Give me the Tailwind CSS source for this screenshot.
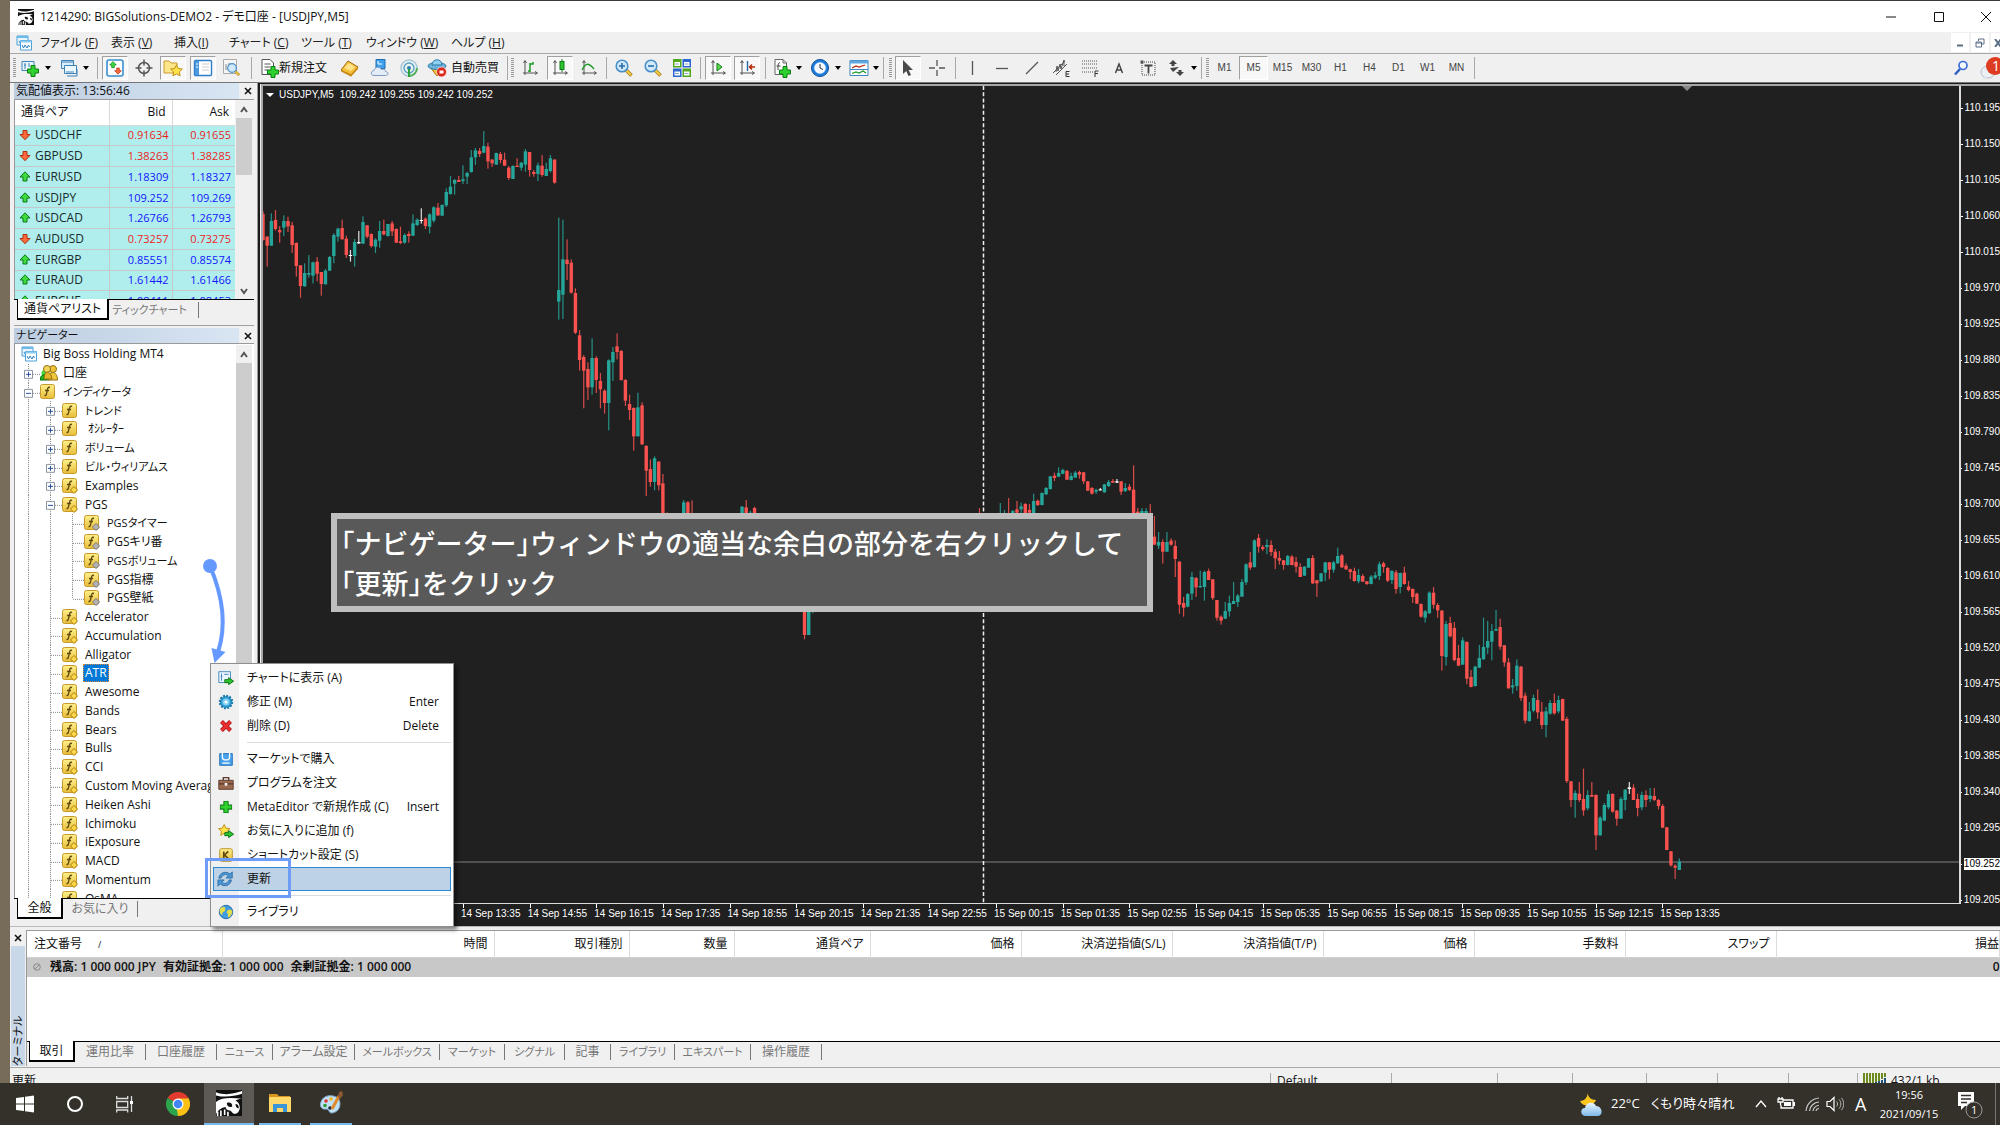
<!DOCTYPE html>
<html lang="ja">
<head>
<meta charset="utf-8">
<title>1214290: BIGSolutions-DEMO2 - デモ口座 - [USDJPY,M5]</title>
<script src="https://cdn.jsdelivr.net/npm/@tailwindcss/browser@4"></script>
</head>
<body class="h-screen overflow-hidden bg-[#776b5a] font-['Open_Sans','Noto_Sans_CJK_JP',sans-serif] text-xs text-[#111] [font-feature-settings:'palt']">

<svg class="absolute size-0" aria-hidden="true" xmlns="http://www.w3.org/2000/svg">
  <defs>
    <linearGradient id="gold" x1="0" y1="0" x2="0" y2="1"><stop offset="0" stop-color="#fff08c"/><stop offset="1" stop-color="#e8bd38"/></linearGradient>
    <linearGradient id="sky" x1="0" y1="0" x2="0" y2="1"><stop offset="0" stop-color="#eaf6ff"/><stop offset="1" stop-color="#7db9e8"/></linearGradient>
  </defs>
  <symbol id="i-plus" viewBox="0 0 12 12"><path d="M4 .5h4V4h3.500v4H8v3.500H4V8H.5V4H4z" fill="#2fd12f" stroke="#0c7f12"/></symbol>
  <symbol id="i-pirate" viewBox="0 0 24 24"><path fill="#111" d="M0 0h24v24H0z"/><path d="M0 2c8 3 15 2 24-1v2.500C16 6 8 7 0 5z" fill="#fff"/><path d="M0 11C5 7 13 7 24 8c-3 0-5 1-6 2 3 1 4 4 4 7-1 3-2 5-5 5-2 0-2-2-4-3-2 0-4-1-4-3-4 0-6 2-9 6z" fill="#fff"/><path d="M10 12c3-1 5 0 5 3-2 2-5 0-5-3zM18 13c2 0 3 1 3 4-2 0-3-2-3-4z" fill="#111"/><path d="M1.500 20v4M4.500 19v5M8 18v5M11 20v4" stroke="#fff" stroke-width="1.500"/></symbol>
  <symbol id="i-charts" viewBox="0 0 16 16"><path d="M1 1h11v9H1z" fill="#eaf5ff" stroke="#4aa0dc"/><path d="M1 1h11v2H1z" fill="#6db9ea"/><path d="M3 6l1 2 1-2" stroke="#3a8cca" fill="none"/><path d="M4.500 5.500h11v9.500h-11z" fill="#fff" stroke="#4aa0dc"/><path d="M4.500 5.500h11v2h-11z" fill="#8cccf2"/><path d="M6 10l1.500 3L9 10l2 3 1.500-3 1 2" stroke="#2d7fc0" fill="none"/></symbol>
  <symbol id="i-f" viewBox="0 0 16 16"><rect x=".5" y=".5" width="14" height="14" rx="2" fill="url(#gold)" stroke="#c69a2a"/><path d="M10 3.500c-2-1-2.500 1-3 4s-1 4.500-2.500 3.800M5 6.500h4" stroke="#5e4a10" stroke-width="1.400" fill="none"/></symbol>
  <symbol id="i-fc" viewBox="0 0 16 16"><use href="#i-f"/><path d="M12 8.500l3.500 3.500L12 15.500 8.500 12z" fill="#ffd84a" stroke="#a87d10"/></symbol>
  <symbol id="i-fg" viewBox="0 0 16 16"><use href="#i-f"/><path d="M12 8.500l3.500 3.500L12 15.500 8.500 12z" fill="#b4b4b4" stroke="#777"/></symbol>
  <symbol id="i-people" viewBox="0 0 18 16"><circle cx="4.500" cy="8" r="3" fill="#46d83e"/><path d="M0 15c0-7 9-7 9 0z" fill="#18b418" stroke="#087008"/><circle cx="13" cy="4" r="3.500" fill="#eec23a" stroke="#937010"/><path d="M8 15c0-10 9.500-10 9.500 0z" fill="#f0c83c" stroke="#937010"/><circle cx="7" cy="4" r="3.500" fill="#f5d65c" stroke="#937010"/><path d="M4 14c0-9 7-9 8 0z" fill="#e5b428" stroke="#937010"/></symbol>
  <symbol id="i-up" viewBox="0 0 12 12"><path d="M6 .8l5 5.200H8V10H4V6H1z" fill="#3edb3e" stroke="#0b7a19"/></symbol>
  <symbol id="i-down" viewBox="0 0 12 12"><path d="M6 10.700L1 5.500h3v-4h4v4h3z" fill="#ff6a3c" stroke="#b02c0c"/></symbol>
  <symbol id="i-axes" viewBox="0 0 20 20"><path d="M5 3v14M3 15h14M3.500 5L5 2.500 6.500 5M15 13.500l2.500 1.500-2.500 1.500" stroke="#555" fill="none"/></symbol>
  <symbol id="i-star" viewBox="0 0 14 14"><path d="M7 .8l1.900 4 4.400.6-3.200 3 .8 4.400L7 10.700l-3.900 2.100.8-4.400-3.200-3 4.400-.6z" fill="#ffe14a" stroke="#b98a10"/></symbol>
  <symbol id="i-lens" viewBox="0 0 20 20"><path d="M11.500 11.500l6 6" stroke="#a67c12" stroke-width="3.500"/><path d="M11.500 11.500l5.500 5.500" stroke="#f5cc48" stroke-width="2"/><circle cx="8" cy="8" r="5.800" fill="#cfe8fb" stroke="#4a90c8" stroke-width="1.600"/></symbol>
  <symbol id="i-arrow" viewBox="0 0 10 8"><path d="M.5 2.500h4v-2L9.500 4l-5 3.500v-2h-4z" fill="#2fc52f" stroke="#0b7414"/></symbol>
  <symbol id="i-page" viewBox="0 0 20 20"><path d="M3 1.500h8l3.500 3.500v11.500H3z" fill="#fff" stroke="#666"/><path d="M11 1.500V5h3.500" fill="none" stroke="#666"/></symbol>
</svg>

<div class="flex h-full flex-col">
 <div class="min-h-0 flex-1 overflow-hidden pl-[10px]">
 <main class="flex h-full flex-col border-t border-[#3d3a35] bg-[#f0f0f0]">

  <header class="flex h-[31px] shrink-0 items-center bg-white pl-2">
    <svg class="mr-1.5 size-4"><use href="#i-pirate"/></svg>
    <h1 class="flex-1 text-xs">1214290: BIGSolutions-DEMO2 - デモ口座 - [USDJPY,M5]</h1>
    <button aria-label="最小化" class="grid w-12 place-items-center"><svg class="h-3 w-3" viewBox="0 0 12 12"><path d="M1 6h10" stroke="#111"/></svg></button>
    <button aria-label="最大化" class="grid w-12 place-items-center"><svg class="h-3 w-3" viewBox="0 0 12 12"><path d="M1.500 1.500h9v9h-9z" fill="none" stroke="#111"/></svg></button>
    <button aria-label="閉じる" class="grid w-[37px] place-items-center pl-2"><svg class="h-3 w-3" viewBox="0 0 12 12"><path d="M1 1l10 10M11 1L1 11" stroke="#111"/></svg></button>
  </header>

  <nav class="flex h-[21px] shrink-0 items-center pl-1.5 whitespace-nowrap text-[#222]">
    <svg class="mr-2 size-4"><use href="#i-charts"/></svg>
    <a href="#" class="w-[71px]">ファイル (<u>F</u>)</a>
    <a href="#" class="w-[63px]">表示 (<u>V</u>)</a>
    <a href="#" class="w-[55px]">挿入(<u>I</u>)</a>
    <a href="#" class="w-[72px]">チャート (<u>C</u>)</a>
    <a href="#" class="w-[65px]">ツール (<u>T</u>)</a>
    <a href="#" class="w-[85px]">ウィンドウ (<u>W</u>)</a>
    <a href="#">ヘルプ (<u>H</u>)</a>
    <div class="ml-auto flex h-[19px] gap-0.5">
      <button aria-label="チャートを最小化" class="grid w-[18px] place-items-center bg-white"><svg class="size-2" viewBox="0 0 8 8"><path d="M1 6.500h6" stroke="#5b6f86" stroke-width="2"/></svg></button>
      <button aria-label="チャートを元に戻す" class="grid w-[18px] place-items-center bg-white"><svg class="size-2.5" viewBox="0 0 10 10"><path d="M3.500 3V1h5.500v5H7M1 4h5.500v5H1zM1 5h5" stroke="#5b6f86" fill="none"/></svg></button>
      <button aria-label="チャートを閉じる" class="grid w-[9px] place-items-center overflow-hidden bg-white"><svg class="size-2" viewBox="0 0 8 8"><path d="M3 0l6 8M9 0L3 8" stroke="#5b6f86" stroke-width="2"/></svg></button>
    </div>
  </nav>

  <div id="toolbar" class="flex h-[29px] shrink-0 items-center border-t border-[#a8a8a8] whitespace-nowrap"></div>

  <div class="flex min-h-0 flex-1 border-t border-[#777]">
    <aside class="flex w-[248px] shrink-0 flex-col border-r border-[#9a9a9a] pr-[3px] pl-1">
      <section class="flex h-[243px] shrink-0 flex-col border-b border-[#a0a0a0]">
        <div class="flex h-[16px] shrink-0 items-center">
          <h2 class="h-full flex-1 bg-linear-to-r from-[#bccde0] to-[#d8e5f3] pl-0.5 text-xs leading-4">気配値表示: 13:56:46</h2>
          <button aria-label="気配値表示を閉じる" class="grid w-[15px] place-items-center pl-0.5"><svg class="size-2" viewBox="0 0 8 8"><path d="M1 1l6 6M7 1L1 7" stroke="#111" stroke-width="1.600"/></svg></button>
        </div>
        <div class="flex h-[200px] shrink-0 overflow-hidden border-t border-l border-[#999]">
          <table class="h-[212px] w-[220px] shrink-0 table-fixed border-collapse bg-[#b0eeee]">
            <thead class="bg-white text-xs"><tr class="h-[25px]"><th class="w-[94px] border-r border-b border-[#d9d9d9] pl-1.5 text-left font-normal">通貨ペア</th><th class="w-[63px] border-r border-b border-[#d9d9d9] pr-1.5 text-right font-normal">Bid</th><th class="border-b border-[#d9d9d9] pr-1.5 text-right font-normal">Ask</th></tr></thead>
            <tbody id="quotes"></tbody>
          </table>
          <div class="flex w-[17px] flex-col items-center bg-[#f0f0f0]">
            <svg class="mt-1.5 h-2 w-2" viewBox="0 0 8 8"><path d="M1 6l3-4 3 4" fill="none" stroke="#555" stroke-width="2"/></svg>
            <div class="mt-1 h-[57px] w-4 bg-[#cdcdcd]"></div>
            <svg class="mt-auto mb-1 h-2 w-2" viewBox="0 0 8 8"><path d="M1 2l3 4 3-4" fill="none" stroke="#555" stroke-width="2"/></svg>
          </div>
        </div>
        <div class="flex h-[21px] border-t border-black pl-[3px] whitespace-nowrap">
          <button class="-mt-px w-[92px] border-r-2 border-b-2 border-l border-black bg-white">通貨ペアリスト</button>
          <button class="my-0.5 w-[90px] border-r border-[#777] pr-2 text-[11px] text-[#777]">ティックチャート</button>
        </div>
      </section>

      <section class="flex min-h-0 flex-1 flex-col pt-[2px]">
        <div class="flex h-[15px] shrink-0 items-center">
          <h2 class="h-full flex-1 bg-linear-to-r from-[#bccde0] to-[#d8e5f3] pl-0.5 text-[11px] leading-[14px]">ナビゲーター</h2>
          <button aria-label="ナビゲーターを閉じる" class="grid w-[15px] place-items-center pl-0.5"><svg class="size-2" viewBox="0 0 8 8"><path d="M1 1l6 6M7 1L1 7" stroke="#111" stroke-width="1.600"/></svg></button>
        </div>
        <div class="flex h-[555px] shrink-0 overflow-hidden border-t border-l border-[#999] bg-white pt-px">
          <ul id="tree" class="grid h-[563px] w-[221px] shrink-0 auto-rows-fr overflow-hidden pl-[3px] whitespace-nowrap"></ul>
          <div class="flex w-4 flex-col items-center bg-[#f0f0f0]">
            <svg class="mt-1.5 h-2 w-2 shrink-0" viewBox="0 0 8 8"><path d="M1 6l3-4 3 4" fill="none" stroke="#555" stroke-width="2"/></svg>
            <div class="mt-1 w-4 flex-1 bg-[#cdcdcd]"></div>
          </div>
        </div>
        <div class="flex h-[21px] border-t border-black pl-[3px] whitespace-nowrap">
          <button class="-mt-px w-[46px] border-r-2 border-b-2 border-l border-black bg-white">全般</button>
          <button class="my-0.5 w-[75px] border-r border-[#777] text-[#777]">お気に入り</button>
        </div>
      </section>
    </aside>

    <section class="flex min-w-0 flex-1 flex-col border-t border-l-2 border-[#1a1a1a] pl-px">
      <div class="flex min-h-0 flex-1 flex-col border-t-2 border-l-2 border-[#a9a5ab] bg-[#202020] font-['Liberation_Sans',sans-serif] text-[10px] text-white">
        <div class="flex min-h-0 flex-1">
          <div class="relative min-w-0 flex-1 overflow-hidden border-r-2 border-b border-[#dcdcdc]">
            <svg id="plot" class="block h-full w-full" role="img" aria-label="USDJPY 5分足チャート"></svg>
            <p class="absolute top-0 left-[3px] flex h-[18px] items-center"><svg class="mr-[5px] h-1 w-2" viewBox="0 0 8 4"><path d="M0 0h8L4 4z" fill="#fff"/></svg>USDJPY,M5<span class="ml-1.5">109.242 109.255 109.242 109.252</span></p>
          </div>
          <ol id="prices" class="w-[39px] shrink-0 overflow-hidden pt-1"></ol>
        </div>
        <ol id="times" class="grid h-[22px] w-[1266px] shrink-0 grid-cols-19 ml-[198px] whitespace-nowrap"></ol>
      </div>
    </section>
  </div>

  <section class="flex h-[141px] shrink-0 border-t border-[#bbb] pt-[3px] pb-px">
    <div class="flex w-[16px] shrink-0 flex-col items-center px-px">
      <button aria-label="ターミナルを閉じる" class="grid h-4 place-items-center"><svg class="size-2" viewBox="0 0 8 8"><path d="M1 1l6 6M7 1L1 7" stroke="#111" stroke-width="1.600"/></svg></button>
      <h2 class="flex w-full flex-1 rotate-180 items-center bg-[#c9d8e9] text-[11px] leading-3 [text-orientation:sideways] [writing-mode:vertical-rl]">ターミナル</h2>
    </div>
    <div class="flex min-w-0 flex-1 flex-col border-t border-l border-[#999]">
      <div class="h-[110px] shrink-0 overflow-hidden bg-white">
        <table class="w-full min-w-[1973px] table-fixed border-collapse">
          <thead><tr class="h-[26px] border-b border-[#d0d0d0] [&>th]:border-r [&>th]:border-[#dcdcdc] [&>th]:pr-1.5 [&>th]:text-right [&>th]:font-normal">
            <th class="w-[195px]"><span class="block pl-[7px] text-left">注文番号<span class="ml-4 text-[9px]">/</span></span></th>
            <th class="w-[272px]">時間</th><th class="w-[135px]">取引種別</th><th class="w-[105px]">数量</th><th class="w-[136px]">通貨ペア</th><th class="w-[151px]">価格</th><th class="w-[151px]">決済逆指値(S/L)</th><th class="w-[151px]">決済指値(T/P)</th><th class="w-[151px]">価格</th><th class="w-[151px]">手数料</th><th class="w-[151px]">スワップ</th><th class="w-auto"><span class="-mr-1.5">損益</span></th>
          </tr></thead>
          <tbody><tr class="h-5 bg-[#c8c8c8] text-xs font-semibold">
            <td colspan="11" class="p-0 pl-1.5"><div class="flex items-center gap-[7px] leading-4 whitespace-nowrap"><svg class="mr-0.5 size-2" viewBox="0 0 8 8"><circle cx="4" cy="4" r="3.300" fill="none" stroke="#888"/><path d="M2 6l4-4" stroke="#888"/></svg><span>残高: 1 000 000 JPY</span><span>有効証拠金: 1 000 000</span><span>余剰証拠金: 1 000 000</span></div></td>
            <td class="p-0 text-right leading-4">0</td>
          </tr></tbody>
        </table>
      </div>
      <div class="flex h-[21px] border-t border-black pl-0.5 text-[#777]">
        <button class="-mt-px w-[46px] border-r-2 border-b-2 border-l border-black bg-white text-[#111]">取引</button>
        <div class="my-0.5 flex whitespace-nowrap [&>button]:border-r [&>button]:border-[#777]">
          <button class="w-[71px]">運用比率</button><button class="w-[71px]">口座履歴</button><button class="w-[56px] text-[11px]">ニュース</button><button class="w-[82px]">アラーム設定</button><button class="w-[85px] text-[11px]">メールボックス</button><button class="w-[65px] text-[11px]">マーケット</button><button class="w-[60px] text-[11px]">シグナル</button><button class="w-[46px]">記事</button><button class="w-[64px] text-[11px]">ライブラリ</button><button class="w-[76px] text-[11px]">エキスパート</button><button class="w-[71px]">操作履歴</button>
        </div>
      </div>
    </div>
  </section>

  <footer class="flex h-[16px] shrink-0 overflow-hidden border-t border-[#a8a8a8] pt-[5px] whitespace-nowrap">
    <p class="flex-1 pl-0.5">更新</p>
    <p class="w-[121px] border-l border-[#aaa] pl-1.5">Default</p>
    <p class="w-[106px] border-l border-[#aaa]"></p><p class="w-[75px] border-l border-[#aaa]"></p><p class="w-[74px] border-l border-[#aaa]"></p><p class="w-[71px] border-l border-[#aaa]"></p><p class="w-[71px] border-l border-[#aaa]"></p><p class="w-[69px] border-l border-[#aaa]"></p>
    <p class="flex w-[143px] items-start gap-1 border-l border-[#aaa] pl-[5px]"><svg class="h-4 w-6" viewBox="0 0 24 16"><path d="M1 0v12M4 0v12M7 0v12M10 0v10M13 0v9M16 0v8M19 0v6M22 0v4" stroke="#6d8a1e" stroke-width="2"/><path d="M7 13v3M10 11v5M13 9v7M16 8v8M19 7v9M22 5v11" stroke="#1b4f78" stroke-width="2"/></svg>432/1 kb</p>
  </footer>
 </main>
 </div>

 <div class="flex h-[42px] shrink-0 items-center bg-[#34312b] text-white">
   <button aria-label="スタート" class="grid w-[50px] place-items-center"><svg class="size-[18px]" viewBox="0 0 18 18"><path d="M0 3l8-1v6.500H0zM9 1.800L18 .5v8H9zM0 9.500h8V16l-8-1zM9 9.500h9v8l-9-1.300z" fill="#fff"/></svg></button>
   <button aria-label="検索" class="grid w-[50px] place-items-center"><svg class="size-[18px]" viewBox="0 0 18 18"><circle cx="9" cy="9" r="7" fill="none" stroke="#fff" stroke-width="2"/></svg></button>
   <button aria-label="タスクビュー" class="grid w-[50px] place-items-center"><svg class="size-[18px]" viewBox="0 0 18 18"><path d="M.7 1v2.500h11V1M.7 6.500h11v6H.7zM.7 17.500V15h11v2.500M15.500 1v16" fill="none" stroke="#ddd" stroke-width="1.300"/><path d="M14 6h3v3h-3z" fill="#fff"/></svg></button>
   <button aria-label="Chrome" class="grid w-[54px] place-items-center pl-0.5"><svg class="size-6" viewBox="0 0 24 24"><path d="M12 12L1.600 6A12 12 0 0 1 22.400 6z" fill="#e33b2e"/><path d="M12 12L1.600 6A12 12 0 0 0 12 24z" fill="#2ba24c"/><path d="M12 12L22.400 6A12 12 0 0 1 12 24z" fill="#fbc116"/><path d="M12 6.500h10.700L16.500 15 12 24l-1-6z" fill="#fbc116"/><circle cx="12" cy="12" r="5.500" fill="#fff"/><circle cx="12" cy="12" r="4.300" fill="#4285f4"/></svg></button>
   <button aria-label="MT4" class="grid h-full w-[50px] place-items-center border-b-2 border-[#76b9ed] bg-[#5d5a55]"><svg class="size-[26px]"><use href="#i-pirate"/></svg></button>
   <button aria-label="エクスプローラー" class="ml-[5px] grid h-full w-[42px] place-items-center border-b-2 border-[#76b9ed]"><svg class="size-6" viewBox="0 0 24 24"><path d="M1 3h8l2 2h11v4H1z" fill="#d9961e"/><path d="M1 6h22v15H1z" fill="#ffd76a"/><path d="M5 21v-8h14v8h-4v-4H9v4z" fill="#3c94d8"/></svg></button>
   <button aria-label="ペイント" class="ml-[9px] grid h-full w-[42px] place-items-center border-b-2 border-[#76b9ed]"><svg class="size-[26px]" viewBox="0 0 26 26"><path d="M3 12C5 5 14 4 20 8c4 5 2 14-6 15-4 0-2-4-6-4-4 1-7-3-5-7z" fill="#bfe0f5" stroke="#7fa9c8"/><circle cx="8" cy="11" r="1.800" fill="#d33"/><circle cx="13" cy="9" r="1.800" fill="#f5b51e"/><circle cx="7" cy="15.500" r="1.800" fill="#2a9e3a"/><circle cx="12" cy="18" r="1.800" fill="#223"/><path d="M14 19l7-13" stroke="#e08a2a" stroke-width="3"/><path d="M20 7l1-5 3-1 1 4-3 4z" fill="#8c5a32"/></svg></button>
   <div class="ml-auto flex h-full items-center text-[13px]">
     <svg class="mr-2 h-7 w-6" viewBox="0 0 24 28"><path d="M9 1c-1 6 3 9 8 9-2 6-13 8-16 1 5 0 8-4 8-10z" fill="#fbc61e"/><path d="M6 26c-5-1-5-8 0-8 1-6 9-7 11-2 6 0 8 9 2 10z" fill="url(#sky)"/></svg>
     <span class="w-10">22°C</span><span class="w-[104px]">くもり時々晴れ</span>
     <svg class="mr-[10px] h-3 w-3" viewBox="0 0 12 12"><path d="M1 9l5-6 5 6" stroke="#fff" stroke-width="1.300" fill="none"/></svg>
     <svg class="mr-[9px] h-4 w-[18px]" viewBox="0 0 18 16"><path d="M6 4h10v8H4V9M2 1v2M5 1v2M1 3h5v3H1zM3.500 6v3" fill="none" stroke="#fff" stroke-width="1.300"/><path d="M7 6h7v4H7zM16 6h2v4h-2z" fill="#fff"/></svg>
     <svg class="mr-1.5 h-4 w-4" viewBox="0 0 16 16"><path d="M2 15A14 14 0 0 1 15 2M5.500 15A10 10 0 0 1 15 6M9 15a6 6 0 0 1 6-5.500M12 15a3 3 0 0 1 3-2.500" stroke="#ccc" stroke-width="1.200" fill="none"/></svg>
     <svg class="mr-[11px] h-4 w-[18px]" viewBox="0 0 18 16"><path d="M1 5.500h3l4-4v13l-4-4H1z" fill="none" stroke="#fff" stroke-width="1.200"/><path d="M10.500 5.500c1.500 1.500 1.500 3.500 0 5M13 3.500c2.500 2.500 2.500 6.500 0 9M15.500 2c3 3.500 3 8.500 0 12" stroke="#bbb" fill="none"/></svg>
     <span class="w-[19px] text-lg leading-none">A</span>
     <div class="w-[70px] text-center text-[11px] leading-[19px]"><div>19:56</div><div>2021/09/15</div></div>
     <svg class="ml-3 h-9 w-7" viewBox="0 0 28 36"><path d="M2 6h16v14h-9l-4 4v-4H2z" fill="#fff"/><path d="M5 9.500h10M5 13h10M5 16.500h6" stroke="#34312b" stroke-width="1.400"/><circle cx="18" cy="24" r="8" fill="#34312b" stroke="#999"/><text x="15" y="28" font-size="11" fill="#fff">1</text></svg>
     <div class="ml-[11px] h-full w-[5px] border-l border-[#777]"></div>
   </div>
 </div>
</div>

<div class="absolute top-[513px] left-[331px] w-[822px] border-[6px] border-[#bfbfbf] bg-[#595959] px-1 pt-1 pb-[3px] font-['Noto_Sans_CJK_JP',sans-serif] text-[27px] leading-10 font-medium whitespace-nowrap text-white [font-feature-settings:'halt']">「ナビゲーター」ウィンドウの適当な余白の部分を右クリックして<br>「更新」をクリック</div>

<svg class="absolute top-[556px] left-[200px] h-[110px] w-10" viewBox="0 0 40 110"><circle cx="10" cy="10" r="7" fill="#6699ff"/><path d="M10 10C21 36 28 66 18 96" fill="none" stroke="#6699ff" stroke-width="4"/><path d="M11.500 92l14 4-11 11z" fill="#6699ff"/></svg>

<div id="menu" role="menu" class="absolute top-[663px] left-[210px] w-[244px] border border-[#8f8f8f] bg-linear-to-r from-[#f0f0f0] from-[28px] to-white to-[28px] p-0.5 whitespace-nowrap shadow-[3px_3px_4px_rgba(0,0,0,0.45)]"></div>
<div class="absolute top-[858px] left-[205px] h-10 w-[86px] border-[3px] border-[#6f9cf8]"></div>

<script>
const $ = id => document.getElementById(id);

/* toolbar buttons, separators and grips, left to right */
const pressed = 'grid h-6 w-[26px] place-items-center border border-[#a0a0a0] border-r-white border-b-white bg-[#f8f8f8]';
const ico = s => `<svg class="size-5 shrink-0" viewBox="0 0 20 20">${s}</svg>`;
const use = (id, x, y, w, h) => `<use href="#${id}" x="${x}" y="${y}" width="${w}" height="${h}"/>`;
const axes = use('i-axes', 0, 0, 20, 20);
const btn = (cls, label, s) => `<button class="${cls}" aria-label="${label}">${ico(s)}</button>`;
const b = (w, label, s) => btn(`grid h-6 shrink-0 place-items-center ${w}`, label, s);
const p = (label, s, gap = '') => btn(`${pressed} shrink-0 ${gap}`, label, s);
const tri = (w, label) => `<button class="grid h-6 shrink-0 place-items-center ${w}" aria-label="${label}"><svg class="h-1 w-[6px]" viewBox="0 0 6 4"><path d="M0 0h6L3 4z"/></svg></button>`;
const sep = w => `<div class="flex h-[22px] shrink-0 justify-center ${w}"><div class="border-l border-[#a8a8a8]"></div></div>`;
const grip = w => `<div class="flex h-5 shrink-0 justify-center ${w}"><div class="w-[3px] bg-[repeating-linear-gradient(#999_0_1px,#f0f0f0_1px_2px)]"></div></div>`;
const tf = (t, on) => `<button class="grid h-6 w-[29px] shrink-0 place-items-center font-['Liberation_Sans',sans-serif] text-[10px] text-[#444] ${on ? 'border border-[#a0a0a0] border-r-white border-b-white bg-[#f8f8f8]' : ''}">${t}</button>`;
const line = '#555';
$('toolbar').innerHTML = [
  grip('w-2'),
  b('w-6', '新規チャート', `<path d="M2 3.500h12v9H2z" fill="#eaf5ff" stroke="#3e83b8"/><path d="M5 5v6M4 7h2M9 5v4" stroke="#3e83b8"/>` + use('i-plus', 7, 7, 12, 12)),
  tri('w-3', '新規チャートの一覧'),
  b('ml-1 w-[22px]', '組表示', `<path d="M2.500 2.500h12v8h-12z" fill="#d9edfb" stroke="#3e83b8"/><path d="M5.500 7.500h12v8h-12z" fill="#eef8ff" stroke="#3e83b8"/><path d="M2.500 4h12M7 14l8 0M18 11v7H8" stroke="#3e83b8" fill="none"/>`),
  tri('w-3', '組表示の一覧'), sep('w-[10px]'),
  p('気配値表示', `<rect x="2" y="2" width="16" height="16" rx="2" fill="#fff" stroke="#3a8fd0" stroke-width="1.600"/>` + use('i-up', 4, 3, 8, 8) + use('i-down', 9, 9, 8, 8)),
  b('w-8', 'データウィンドウ', `<circle cx="10" cy="10" r="5.500" fill="none" stroke="${line}" stroke-width="1.500"/><path d="M10 1.500v6M10 12.500v6M1.500 10h6M12.500 10h6" stroke="${line}" stroke-width="1.500"/>`),
  p('ナビゲーター', `<path d="M1 3h5l2 2h6v10H1z" fill="#ffe58a" stroke="#c9992a"/>` + use('i-star', 7, 6, 13, 13)),
  p('ターミナル', `<rect x="1.500" y="2.500" width="17" height="15" rx="1" fill="#fff" stroke="#2d7ecb" stroke-width="1.400"/><path d="M2 3h4v14H2z" fill="#4c9be0"/><path d="M9 6h7M9 9h7M9 12h7" stroke="#ccc"/><path d="M3 6h2M3 9h2" stroke="#fff"/>`, 'ml-1'),
  b('w-8', 'ストラテジーテスター', `<path d="M1.500 1.500h13v14h-13z" fill="#f5f5f5" stroke="#aaa"/><path d="M4 12V6M7 13V5" stroke="#888"/>` + use('i-lens', 4, 4, 15, 15)),
  sep('w-[6px]'),
  `<button class="ml-[5px] flex h-6 w-[75px] shrink-0 items-center">${ico(`<path d="M3 1.500h8l3.500 3.500v11.500H3z" fill="#fff" stroke="#555"/><path d="M5.500 6h6M5.500 9h6M5.500 12h4" stroke="#555"/>` + use('i-plus', 8, 8, 12, 12))}新規注文</button>`,
  b('w-[31px]', 'メタエディター', `<path d="M1 12L8 3l10 6-7 9z" fill="#f4bf3b" stroke="#a26c0c"/><path d="M1 12l10 4 7-7v2l-7 7.500L1 13.500z" fill="#c98a18"/><path d="M4 10l5-5 6 4-4 4z" fill="#ffe38a"/>`),
  b('w-[29px]', 'マーケット', `<path d="M6 1.500h9v9H6z" fill="#3fa0ec" stroke="#1c6cb5"/><path d="M8 3v3h4" stroke="#fff" fill="none"/><path d="M4 17.500c-4 0-3-5 0-5 1-4 6-4 7.500-1 2-1 4 0 4 2 4 1 3 4 0 4z" fill="#e3ecf7" stroke="#7f9bc0"/>`),
  b('w-[29px]', 'シグナル', `<circle cx="10" cy="10" r="8" fill="#e7f3ec" stroke="#a8c6d8" stroke-width="1.500"/><circle cx="10" cy="10" r="5" fill="none" stroke="#5b9fc8" stroke-width="1.400"/><path d="M10 18a8 8 0 0 0 8-8" fill="none" stroke="#4fb158" stroke-width="2"/><circle cx="10" cy="10" r="2" fill="#2d7fb5"/><path d="M10 11v8" stroke="#2ea23a" stroke-width="2"/>`),
  `<button class="flex h-6 w-[85px] shrink-0 items-center border-r border-[#a8a8a8] pl-1">${ico(`<path d="M3 9l7 9 8-8z" fill="#f4c03a" stroke="#a9760f"/><ellipse cx="10" cy="8" rx="9" ry="3.500" fill="#6cb4dc" stroke="#2d7ba8"/><path d="M5 7c0-7 10-7 10 0z" fill="#8fd0f0" stroke="#2d7ba8"/><circle cx="14.500" cy="14" r="5" fill="#dd2a1b" stroke="#fff" stroke-width=".6"/><path d="M12.500 12.500h4v3h-4z" fill="#fff"/>`)}<span class="pl-1">自動売買</span></button>`,
  grip('w-2'),
  b('w-[31px] pr-1', 'バーチャート', axes + `<path d="M10 14V5M8 13h2M10 6h3V4" stroke="#1a9a26" stroke-width="1.500" fill="none"/>`),
  p('ローソク足', axes + `<path d="M12 1v13" stroke="#0b7a19"/><rect x="10" y="3.500" width="4" height="8" fill="#2fc52f" stroke="#0b7a19"/>`),
  b('w-[31px]', 'ラインチャート', axes + `<path d="M3 12c4-8 7-7 12-1" stroke="#1a9a26" fill="none" stroke-width="1.300"/>`),
  sep('w-[5px]'),
  b('w-[29px]', '拡大', use('i-lens', 0, 0, 20, 20) + `<path d="M8 5v6M5 8h6" stroke="#2b6ea8" stroke-width="1.600"/>`),
  b('w-[29px]', '縮小', use('i-lens', 0, 0, 20, 20) + `<path d="M5 8h6" stroke="#2b6ea8" stroke-width="1.600"/>`),
  b('w-[29px]', '整列', `<path d="M1 1h8.500v8.500H1zM10.500 10.500H19V19h-8.500z" fill="#52a61c"/><path d="M10.500 1H19v8.500h-8.500zM1 10.500h8.500V19H1z" fill="#2d66d0"/><path d="M2.500 4H8v4H2.500zM12 4h5.500v4H12zM2.500 13.500H8v4H2.500zM12 13.500h5.500v4H12z" fill="#fff"/><path d="M3 6h4M12.500 6h4M3 15.500h4M12.500 15.500h4" stroke="#8ab"/>`),
  sep('w-[9px]'),
  p('自動スクロール', axes + `<path d="M9 5l5 4-5 4z" fill="#5fdc4f" stroke="#0b7a19"/>`),
  p('チャートシフト', axes + `<path d="M10.500 3v10" stroke="#2468a8" stroke-width="1.400"/><path d="M18 9h-5M15 6.500L12.500 9l2.500 2.500" stroke="#b3290d" stroke-width="1.500" fill="none"/>`, 'ml-[3px]'),
  sep('w-[10px]'),
  b('w-6', 'インディケータ', use('i-page', 0, 0, 20, 20) + `<path d="M8 5c-2-1-2 2-2 7M4.500 8h4" stroke="#444" fill="none"/>` + use('i-plus', 7, 8, 12, 12)),
  tri('w-[10px]', 'インディケータの一覧'),
  b('ml-[3px] w-[26px]', '時間足', `<circle cx="10" cy="10" r="8.500" fill="#1f7fe0" stroke="#0e4d97"/><circle cx="10" cy="10" r="5.800" fill="#f4f9ff"/><path d="M10 6v4l3 1.500" stroke="#333" fill="none"/>`),
  tri('w-[10px]', '時間足の一覧'),
  b('ml-1 w-6', '定型チャート', `<path d="M1 2.500h18v15H1z" fill="#fff" stroke="#3a86c2"/><path d="M1 2.500h18v3H1z" fill="#5ea8de"/><path d="M3 10l4-2 3 1 6-2" stroke="#b3290d" fill="none" stroke-width="1.300"/><path d="M1 11.500h18" stroke="#3a86c2"/><path d="M3 15.500l4-1.500 3 1 4-2 3 2" stroke="#1a9a26" fill="none" stroke-width="1.300"/>`),
  tri('w-[10px]', '定型チャートの一覧'), sep('w-[4px]'), grip('w-[10px]'),
  p('カーソル', `<path d="M5 2v14l3.200-3 2.300 5 2.500-1-2.300-5H15z" fill="#4a4a4a"/>`),
  b('w-8', '十字カーソル', `<path d="M10 2v6M10 12v6M2 10h6M12 10h6" stroke="${line}" stroke-width="1.300"/>`),
  sep('w-1'),
  b('w-[30px]', '垂直線', `<path d="M10.500 3v14" stroke="${line}" stroke-width="1.300"/>`),
  b('w-[30px]', '水平線', `<path d="M4 10.500h12" stroke="${line}" stroke-width="1.300"/>`),
  b('w-[29px]', 'トレンドライン', `<path d="M4 16L16 4" stroke="${line}" stroke-width="1.300"/>`),
  b('w-[29px]', 'チャネル', `<path d="M2 15L14 3M5 17L16 6M5 14l1-6 1 5 2-7 1 5 3-9v6" stroke="${line}" fill="none"/><path d="M18.500 13.500h-3.500v5h3.500M15 16h3" stroke="#333" fill="none"/>`),
  b('w-[29px]', 'フィボナッチ', `<path d="M2 3h15M2 6h15M2 10h15M2 14h11" stroke="${line}" stroke-dasharray="1 1"/><path d="M18.500 13h-3.500v6M15 15.500h3" stroke="#333" fill="none"/>`),
  b('w-[29px]', '文字列', `<path d="M6.500 15l3.500-9 3.500 9M7.500 12h5" stroke="#444" stroke-width="1.500" fill="none"/>`),
  b('w-[29px]', 'ラベル', `<path d="M4 4h13v13H4z" stroke="#444" stroke-dasharray="1 1" fill="none"/><path d="M6.500 7.500h8M10.500 7.500v8" stroke="#444" stroke-width="1.800"/><path d="M2.500 2.500h3v3h-3z" fill="#555"/>`),
  b('w-[28px]', '矢印', `<path d="M7 2l4 4H8.500v2h-3V6H3zM14 18l4-4h-2.500v-2h-3v2H10zM4 10l3 4 6-5" fill="#444"/>`),
  tri('w-2', '矢印の一覧'), sep('w-[6px]'), grip('w-[6px]'),
  tf('M1'), tf('M5', true), tf('M15'), tf('M30'), tf('H1'), tf('H4'), tf('D1'), tf('W1'), tf('MN'), sep('w-[6px]'),
  `<button class="ml-auto grid h-6 w-5 place-items-center" aria-label="検索"><svg class="size-4" viewBox="0 0 16 16"><path d="M7 9l-5 5.500" stroke="#2c60c4" stroke-width="2.500"/><circle cx="10" cy="5.500" r="4" fill="#f4f8ff" stroke="#3b6fd6" stroke-width="1.700"/></svg></button>`,
  `<button class="ml-2 h-7 w-[21px] shrink-0 overflow-hidden" aria-label="通知"><svg class="h-7 w-[26px]" viewBox="0 0 26 28"><ellipse cx="9" cy="18" rx="7" ry="6" fill="#eceff4" stroke="#b5bcc6"/><path d="M5 22l-1 4 5-3z" fill="#dfe3ea"/><circle cx="16" cy="12" r="9" fill="#dd3c20"/><text x="13" y="17" font-size="14" fill="#fff">1</text></svg></button>`
].join('');

/* market watch */
$('quotes').innerHTML = [
  ['USDCHF', '0.91634', '0.91655', 0], ['GBPUSD', '1.38263', '1.38285', 0], ['EURUSD', '1.18309', '1.18327', 1],
  ['USDJPY', '109.252', '109.269', 1], ['USDCAD', '1.26766', '1.26793', 1], ['AUDUSD', '0.73257', '0.73275', 0],
  ['EURGBP', '0.85551', '0.85574', 1], ['EURAUD', '1.61442', '1.61466', 1], ['EURCHF', '1.08411', '1.08453', 1]
].map(([s, bid, ask, up]) => `<tr class="border-b border-[#c4c8c8] ${up ? 'text-[#1414ff]' : 'text-[#ee1c1c]'}">
  <td class="border-r border-[#c4c8c8] p-0 pl-1 text-xs leading-4 text-[#1a2a2a]"><div class="flex items-center gap-1"><svg class="size-3"><use href="#${up ? 'i-up' : 'i-down'}"/></svg>${s}</div></td>
  <td class="border-r border-[#c4c8c8] p-0 pr-[3px] text-right text-[11px] leading-4">${bid}</td><td class="p-0 pr-1 text-right text-[11px] leading-4">${ask}</td></tr>`).join('');

/* navigator tree: [level, icon, label, expander] */
const tree = [[0, 'i-charts', 'Big Boss Holding MT4'], [1, 'i-people', '口座', '+'], [1, 'i-f', 'インディケータ', '-'],
  [2, 'i-f', 'トレンド', '+'], [2, 'i-f', '&nbsp;ｵｼﾚｰﾀｰ', '+'], [2, 'i-f', 'ボリューム', '+'], [2, 'i-f', 'ビル・ウィリアムス', '+'],
  [2, 'i-fc', 'Examples', '+'], [2, 'i-fc', 'PGS', '-'],
  ...['タイマー', 'キリ番', 'ボリューム', '指標', '壁紙'].map(t => [3, 'i-fg', 'PGS' + t]),
  ...['Accelerator', 'Accumulation', 'Alligator', 'ATR', 'Awesome', 'Bands', 'Bears', 'Bulls', 'CCI', 'Custom Moving Average', 'Heiken Ashi', 'Ichimoku', 'iExposure', 'MACD', 'Momentum', 'OsMA'].map(t => [2, 'i-fc', t])];
const dots = 'stroke="#888" stroke-dasharray="1 1"';
$('tree').innerHTML = tree.map(([lv, icon, label, ex], i) => {
  let cells = '';
  for (let c = 1; c <= lv; c++) {
    const last = c === lv, end = c === 3 && tree[i + 1][0] < 3;
    cells += `<svg class="h-full w-[22px] shrink-0" viewBox="0 0 22 19" preserveAspectRatio="none"><path d="M10.500 0V${end ? 10 : 19}" ${dots}/>${last ? `<path d="M11 10.500H22" ${dots}/>` : ''}${last && ex ? `<path d="M6.500 6.500h8v8h-8z" fill="#fff" stroke="#8a93a0"/><path d="M8 10.500h5${ex === '+' ? 'M10.500 8v5' : ''}" stroke="#2a4fa0"/>` : ''}</svg>`;
  }
  const sel = label === 'ATR' ? 'bg-[#0078d7] px-0.5 -ml-0.5 text-white outline-1 -outline-offset-1 outline-dotted outline-[#e08a3a]' : '';
  const kana = /[ァ-ヶ]{3}/.test(label) ? 'text-[11px]' : '';
  return `<li class="flex min-h-0 items-center ${lv ? '' : 'pl-[3px]'}">${cells}<svg class="${icon === 'i-people' ? 'mr-[5px] w-[18px]' : lv ? 'mr-[7px] w-4' : 'mr-1.5 w-4'} h-4 shrink-0"><use href="#${icon}"/></svg><span class="leading-[18px] ${kana} ${sel}">${label}</span></li>`;
}).join('');

/* price and time scales */
let prices = '';
for (let i = 0; i < 23; i++) {
  const now = i === 21, v = now ? '109.252' : (110.195 - (i > 21 ? i : i) * 0.045).toFixed(3);
  prices += `<li class="flex h-9 items-center"><span class="mr-0.5 w-[3px] border-t border-white"></span><span class="leading-3 ${now ? 'bg-white text-black' : ''}">${v}</span></li>`;
}
$('prices').innerHTML = prices;
$('times').innerHTML = ['14 Sep 13:35', '14 Sep 14:55', '14 Sep 16:15', '14 Sep 17:35', '14 Sep 18:55', '14 Sep 20:15', '14 Sep 21:35', '14 Sep 22:55', '15 Sep 00:15', '15 Sep 01:35', '15 Sep 02:55', '15 Sep 04:15', '15 Sep 05:35', '15 Sep 06:55', '15 Sep 08:15', '15 Sep 09:35', '15 Sep 10:55', '15 Sep 12:15', '15 Sep 13:35']
  .map(t => `<li><div class="ml-0.5 h-1 border-l border-white"></div><div class="leading-3">${t}</div></li>`).join('');

/* candles: colour, high, body top, body bottom, low; three units to the pixel, measured from each run's base */
const runs = [
 [0, 110, 'r303 312 390 392,r378 380 407 470,g310 333 407 407,r300 330 357 362,r348 360 367 398,g316 333 353 378,r320 333 349 366,r336 346 405 429,r397 399 468 500,r466 466 528 563,g460 489 529 530,g435 489 494 503,g455 457 497 520,r441 455 491 514,r486 486 522 557,g477 482 523 523,g438 441 482 482,g370 375 438 460,g353 356 380 395,r329 354 388 388,r377 386 435 444,w420 435 438 455,g387 396 438 470,w363 396 400 402,g319 336 401 401,r345 346 380 385,r370 372 408 413,g385 389 410 429,g333 363 392 413,r329 363 373 376,g342 342 378 380,r333 340 364 378,r355 357 398 398,r350 394 399 402,g370 375 398 401,r364 372 378 398,g313 340 377 377,g325 329 345 348,w295 330 333 341,r322 326 348 357,g310 313 350 370,g289 292 332 338,r279 293 316 318,g283 285 317 317,g235 246 286 291,g198 230 252 254,g207 210 221 254,r198 210 216 216,g166 208 213 222,g186 189 200 222,g120 142 186 188,g114 121 142 165,r114 123 132 141,g63 108 128 130,r98 110 154 176,r147 149 160 171,g128 129 164 164,r126 132 150 160,r128 149 167 167,r168 173 204 210,g166 168 207 207,r145 167 171 171,g156 158 173 182,g117 124 164 185,r126 126 180 200,r180 186 192 200,g158 166 192 213,r135 167 195 200,g158 177 198 198,g135 145 183 188,r147 149 218 221,g323 540 575 629,g329 448 554 627,r388 449 462 510,r448 458 548 551,r535 549 668 672,r660 676 750 782,r735 741 782 895,r757 777 832 870,g685 744 832 854,r739 744 810 849,r789 813 838 895,r838 842 879 911,g748 751 879 961,g711 726 757 813,r670 709 726 748,r720 723 810 812,r807 810 872 888,r854 882 900 930,r892 894 979 1022,g848 892 979 979,r877 886 1003 1005,r1005 1008 1082 1158,r1048 1077 1116 1130,g1039 1045 1116 1141,r1053 1055 1126 1141,r1092 1120 1300 1300,r1207 1215 1300 1300'],
 [101, 110, 'g1170 1177 1240 1240,r1173 1177 1240 1240,r1171 1215 1250 1250'],
 [115, 110, 'g1188 1190 1240 1240,r1170 1192 1240 1240,g1202 1208 1240 1240,r1190 1194 1240 1240'],
 [130, 110, 'r1400 1450 1575 1588,g1400 1450 1575 1575,g1400 1420 1450 1510'],
 [172, 440, 'r204 230 240 240'],
 [177, 440, 'g189 225 240 240,g210 220 240 240,r174 225 240 240,g210 213 240 240,r183 208 218 240,g188 199 208 240,r189 192 240 240,r192 210 218 240,g161 183 240 240,r179 182 195 198,g157 159 195 196,g141 144 163 165,g108 109 147 149,r98 107 114 123,g82 99 110 111,g86 90 101 103,r90 93 119 120,g98 108 120 121,g93 98 113 113,r92 96 104 116,r96 97 124 132,r123 124 152 153,r141 144 161 164,g146 150 155 162,w144 148 151 152,g132 133 157 158,g120 126 138 141,r117 123 128 128,w117 124 128 129,r123 124 155 165,g129 144 153 156,r132 140 150 153,r76 149 240 240,r204 215 240 240,g204 213 240 240,g204 213 240 240,r192 225 240 240,r228 290 314 314,g276 306 317 327,r298 306 335 371,g276 306 335 336,r295 302 314 317,r301 318 357 411,r363 365 494 521,r471 489 503 530,g459 462 500 502,g396 411 461 480,r411 414 442 471,g392 438 442 443,g392 396 441 482,r386 393 420 420,r417 418 474 480,r480 480 533 542,r526 530 542 554,g486 513 536 537,g467 489 514 530,g426 483 492 492,g462 467 486 501,g417 426 470 470,g370 373 427 435,r336 367 383 390,g298 301 381 383,r282 294 320 338,r315 321 327 333,g298 315 321 343,r301 315 336 348,r327 335 355 387,r333 354 362 374,r360 361 375 389,g345 348 375 376,r345 350 375 376,r351 366 380 398,r370 381 411 411,g378 380 407 408,g354 355 383 384,r345 354 430 432,r420 421 430 471,g399 400 424 426,g366 367 398 423,r366 367 389 417,g363 367 389 398,g323 348 370 371,r342 346 382 384,r370 377 388 390,r386 388 396 417,r383 393 423 425,g387 405 424 430,r402 408 425 426,r423 424 432 435,g405 410 432 433,g396 406 413 417,g365 373 408 420,r365 370 381 398,r381 384 422 426,g390 393 420 432,r390 397 447 461'],
 [273, 540, 'g98 99 141 160,r80 98 132 134,r123 140 150 154,r145 147 171 189,r158 161 191 192,r190 192 230 233,g210 214 233 248,g154 158 220 221,r141 158 194 206,r189 195 211 233,r210 212 348 392,g243 252 351 377,r230 249 289 292,r246 264 360 364,r315 354 377 377,g292 301 374 375,r304 306 416 433,r390 411 441 442,g377 380 438 440,g315 354 383 384,g233 321 358 359,g243 303 323 342,g252 273 305 361,g210 267 272 273,r236 261 320 329,r315 316 367 380,r354 367 445 446,g417 436 442 461,g358 377 438 452,r378 380 474 483,r458 467 542 551,g486 514 543 545,g464 474 512 517,r448 480 517 536,r486 515 555 567,g501 514 555 592,g480 489 521 524,r461 489 520 524,g467 480 514 520,r476 477 542 542,r530 537 723 729,r723 724 780 801,g751 759 780 833,r726 761 780 786,r686 777 811 827,g751 765 805 811,r726 765 770 771,r763 765 886 930,g829 833 886 887,g789 795 842 842,g751 762 802 808,r760 762 815 818,r810 812 836 857,g771 777 836 836,g747 749 780 811,w726 742 747 762,r733 743 780 780,r761 777 804 829,g755 765 802 811,r751 765 780 801,g744 767 777 786,r744 768 780 783,r777 780 798 808,r792 798 863 864,r861 862 930 930,r933 934 976 980,r973 977 983 1017,g955 965 990 990']
];
const LEFT = 263, TOP = 86, colours = { r: '#f9524f', g: '#26a69a', w: '#fff' };
let art = `<path d="M0 776H4000" stroke="#505050" stroke-width="2"/><path d="M720.500 0V2000" stroke="#eee" stroke-width="1.500" stroke-dasharray="4 2.200"/><path d="M1419 0h10l-5 5z" fill="#888"/>`;
for (const [start, base, list] of runs) list.split(',').forEach((c, k) => {
  const x = 263 + (start + k) * 4.1656 - LEFT, [hi, top, bot, lo] = c.slice(1).split(' ').map(v => base + v / 3 - TOP), f = colours[c[0]];
  art += `<rect x="${x - 0.6}" y="${hi}" width="1.200" height="${lo - hi}" fill="${f}" opacity=".85"/><rect x="${x - 1.7}" y="${top}" width="3.400" height="${Math.max(bot - top, 1)}" fill="${f}"/>`;
});
$('plot').innerHTML = art;

/* context menu: [drawing, label, shortcut] */
const items = [
  [`<path d="M2 3h13v12H2z" fill="#eaf5ff" stroke="#3e83b8"/><path d="M5 5v8M4 8h2M8 6h5" stroke="#3e83b8"/>` + use('i-arrow', 8, 9, 11, 9), 'チャートに表示 (A)', ''],
  [`<circle cx="10" cy="10" r="6.800" fill="#2f9bd0" stroke="#1c76aa" stroke-width="2.500" stroke-dasharray="2 1.500"/><circle cx="10" cy="10" r="4" fill="#7fd0f2"/><circle cx="10" cy="10" r="1.800" fill="#fff"/>`, '修正 (M)', 'Enter'],
  [`<path d="M5 5l10 10M15 5L5 15" stroke="#a51010" stroke-width="4.500"/><path d="M5 5l10 10M15 5L5 15" stroke="#e93030" stroke-width="2.800"/>`, '削除 (D)', 'Delete'],
  null,
  [`<path d="M3 4h14v13H3z" fill="#4aa3ea" stroke="#1c6cb5"/><path d="M6 3v5c0 4 8 4 8 0V3M6 14.500h8" fill="none" stroke="#fff" stroke-width="1.500"/>`, 'マーケットで購入', ''],
  [`<path d="M2 7h16v10H2z" fill="#9a6a50" stroke="#5a3828"/><path d="M7 7V4h6v3M2 11h16" fill="none" stroke="#5a3828" stroke-width="1.500"/><path d="M8.500 10h3v3h-3z" fill="#eee"/>`, 'プログラムを注文', ''],
  [use('i-plus', 3, 3, 14, 14), 'MetaEditor で新規作成 (C)', 'Insert'],
  [use('i-star', 1, 2, 14, 14) + use('i-arrow', 8, 9, 11, 9), 'お気に入りに追加 (f)', ''],
  [`<rect x="3" y="3" width="14" height="14" rx="2" fill="url(#gold)" stroke="#b98f26"/><path d="M7.500 6v8M12.500 6l-4 4 4 4" stroke="#5e4a10" stroke-width="1.800" fill="none"/>`, 'ショートカット設定 (S)', ''],
  [`<path d="M2 9c1-7 9-8 12.500-4.500L17 2v7h-7l2.500-2.500C10 4 6 5 4.500 9zM16 11c-1 7-9 8-12.500 4.500L1 18v-7h7l-2.500 2.500C8 16 12 15 13.500 11z" fill="#4a95d2" stroke="#24639e" stroke-width=".8"/>`, '更新', ''],
  null,
  [`<circle cx="10" cy="10" r="7.500" fill="#3f9be0" stroke="#2468a8"/><path d="M5 5c3-2 5 0 4 3s-3 1-3 4-3 0-3-3 1-3 2-4zM12 8c3-2 5 0 5 2s-2 5-4 6c-2-1 0-3-1-4s-2-2 0-4z" fill="#e3dd4a"/>`, 'ライブラリ', '']
];
$('menu').innerHTML = items.map(it => it === null ? '<div class="ml-[34px] h-[9px] pt-1"><div class="border-t border-[#dcdcdc]"></div></div>'
  : `<button role="menuitem" class="flex h-6 w-full items-center border pr-[11px] ${it[1] === '更新' ? 'border-[#2a8ad8] bg-[#bdd2e4]' : 'border-transparent'}"><svg class="mr-3 ml-[3px] size-[18px] shrink-0" viewBox="0 0 20 20">${it[0]}</svg><span class="flex-1 text-left">${it[1]}</span><span>${it[2]}</span></button>`).join('');
</script>
</body>
</html>
